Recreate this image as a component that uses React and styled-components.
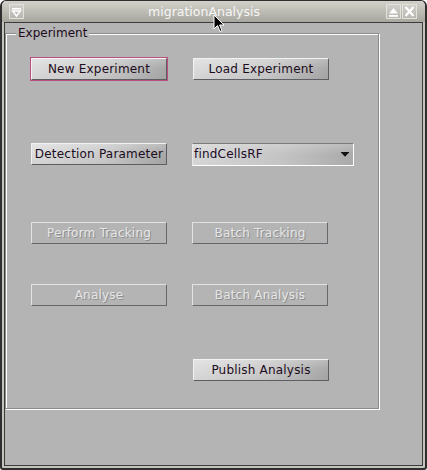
import React from "react";
import styled, { createGlobalStyle, css } from "styled-components";

const Global = createGlobalStyle`
  html, body { margin: 0; padding: 0; background: #ffffff; }
  body { font-family: "DejaVu Sans", "Liberation Sans", sans-serif; }
  * { box-sizing: border-box; }
`;

const Window = styled.div`
  position: relative;
  width: 427px;
  height: 470px;
  display: flex;
  flex-direction: column;
  background: #c3c2bb;
  border: 2px solid #2f2f2f;
  border-top-width: 1px;
  border-radius: 6px 6px 3px 3px;
  overflow: hidden;
`;

const TitleBar = styled.div`
  height: 21px;
  display: flex;
  align-items: center;
  padding: 0 8px 0 7px;
  background: linear-gradient(#d2d1ca, #a7a69f);
`;

const TitleText = styled.div`
  flex: 1;
  text-align: center;
  color: #f6f6f4;
  font-size: 12.5px;
  line-height: 21px;
  padding-right: 2px;
`;

const TitleButtons = styled.div`
  display: flex;
  gap: 1px;
`;

const TitleButton = styled.div`
  width: 15px;
  height: 15px;
  border: 1px solid #e2e1dc;
  background: rgba(255, 255, 255, 0.12);
  display: flex;
  align-items: center;
  justify-content: center;
  svg { display: block; }
`;

const Body = styled.div`
  flex: 1;
  margin: 0 2px 2px;
  border: 1px solid #3c3c3c;
  background: #b4b4b4;
  padding-top: 10px;
`;

const GroupBox = styled.div`
  position: relative;
  width: 374px;
  height: 376px;
  border: 1px solid #8c8c8c;
  box-shadow: inset 1px 1px 0 #ffffff, 1px 1px 0 #ffffff;
  padding: 24px 0 0 25px;
`;

const Legend = styled.div`
  position: absolute;
  top: -8px;
  left: 10px;
  padding: 0 2px;
  background: #b4b4b4;
  font-size: 12px;
  line-height: 15px;
  color: #200a20;
`;

const Grid = styled.div`
  display: grid;
  grid-template-columns: 136px 162px;
  column-gap: 25px;
  align-items: start;
`;

const Row = styled.div`
  display: contents;
`;

const Spacer = styled.div`
  height: ${(p) => p.$h}px;
  grid-column: 1 / -1;
`;

const Button = styled.button`
  width: 136px;
  height: 22px;
  padding: 0;
  margin: 0;
  margin-left: ${(p) => p.$shift || 0}px;
  font-family: "DejaVu Sans", "Liberation Sans", sans-serif;
  font-size: 12px;
  letter-spacing: 0.2px;
  line-height: 20px;
  text-align: center;
  color: #1c0c1c;
  border: 1px solid;
  border-color: #f2f2f2 #5e5e62 #5e5e62 #f2f2f2;
  background:
    linear-gradient(to bottom, rgba(255, 255, 255, 0.22), rgba(255, 255, 255, 0) 45%, rgba(0, 0, 0, 0.04)),
    linear-gradient(to right, #dcdcdc, #cbcbcb 55%, #a9a9a9);
  grid-column: ${(p) => p.$col || "auto"};
  ${(p) =>
    p.$focus &&
    css`
      box-shadow: 0 0 0 1px #bb4f7f;
    `}
  ${(p) =>
    p.disabled &&
    css`
      background: #b4b4b4;
      border-color: #e2e2e2 #66666c #66666c #e2e2e2;
      color: #e6e6e6;
      text-shadow: 1px 1px 0 #8e8e8e;
    `}
`;

const Combo = styled.div`
  width: 162px;
  height: 23px;
  display: flex;
  align-items: center;
  padding: 0 4px 0 1px;
  border: 1px solid;
  border-color: #7a7a7a #ffffff #ffffff #e8e8e8;
  background:
    linear-gradient(to bottom, rgba(255, 255, 255, 0.2), rgba(255, 255, 255, 0) 50%),
    linear-gradient(to right, #d6d6d6, #c4c4c4 55%, #aaaaaa);
  font-size: 12px;
  letter-spacing: 0.2px;
  color: #200a28;
`;

const ComboText = styled.span`
  flex: 1;
  line-height: 21px;
`;

const Cursor = styled.svg`
  position: absolute;
  left: 211px;
  top: 13px;
`;

export default function App() {
  return (
    <>
      <Global />
      <Window>
        <TitleBar>
          <TitleButton>
            <svg width="13" height="13" viewBox="0 0 13 13">
              <rect x="2" y="3" width="9" height="1.6" fill="#fff" />
              <path d="M2.6 6 L10.4 6 L6.5 11 Z" fill="none" stroke="#fff" strokeWidth="1.4" strokeLinejoin="miter" />
            </svg>
          </TitleButton>
          <TitleText>migrationAnalysis</TitleText>
          <TitleButtons>
            <TitleButton>
              <svg width="13" height="13" viewBox="0 0 13 13">
                <path d="M2 8.5 L11 8.5 L6.5 3 Z" fill="#fff" />
                <rect x="2" y="10" width="9" height="1.8" fill="#fff" />
              </svg>
            </TitleButton>
            <TitleButton>
              <svg width="13" height="13" viewBox="0 0 13 13">
                <path d="M2.5 2 L10.5 11 M10.5 2 L2.5 11" stroke="#fff" strokeWidth="2.2" />
              </svg>
            </TitleButton>
          </TitleButtons>
        </TitleBar>
        <Body>
          <GroupBox>
            <Legend>Experiment</Legend>
            <Grid>
              <Row>
                <Button $focus>New Experiment</Button>
                <Button $shift={1}>Load Experiment</Button>
              </Row>
              <Spacer $h={63} />
              <Row>
                <Button>Detection Parameter</Button>
                <Combo>
                  <ComboText>findCellsRF</ComboText>
                  <svg width="8" height="5" viewBox="0 0 8 5">
                    <rect x="0" y="0" width="8" height="1" fill="#111" />
                    <path d="M0.5 1 L7.5 1 L4 4.8 Z" fill="#111" />
                  </svg>
                </Combo>
              </Row>
              <Spacer $h={56} />
              <Row>
                <Button disabled>Perform Tracking</Button>
                <Button disabled>Batch Tracking</Button>
              </Row>
              <Spacer $h={40} />
              <Row>
                <Button disabled>Analyse</Button>
                <Button disabled>Batch Analysis</Button>
              </Row>
              <Spacer $h={53} />
              <Row>
                <Button $col="2" $shift={1}>Publish Analysis</Button>
              </Row>
            </Grid>
          </GroupBox>
        </Body>
        <Cursor width="12" height="19" viewBox="0 0 12 19">
          <path d="M1 1 L1 15 L4.5 11.5 L7 17.5 L9 16.6 L6.6 11 L11 11 Z" fill="#000" stroke="#fff" strokeWidth="1" strokeLinejoin="round" />
        </Cursor>
      </Window>
    </>
  );
}
